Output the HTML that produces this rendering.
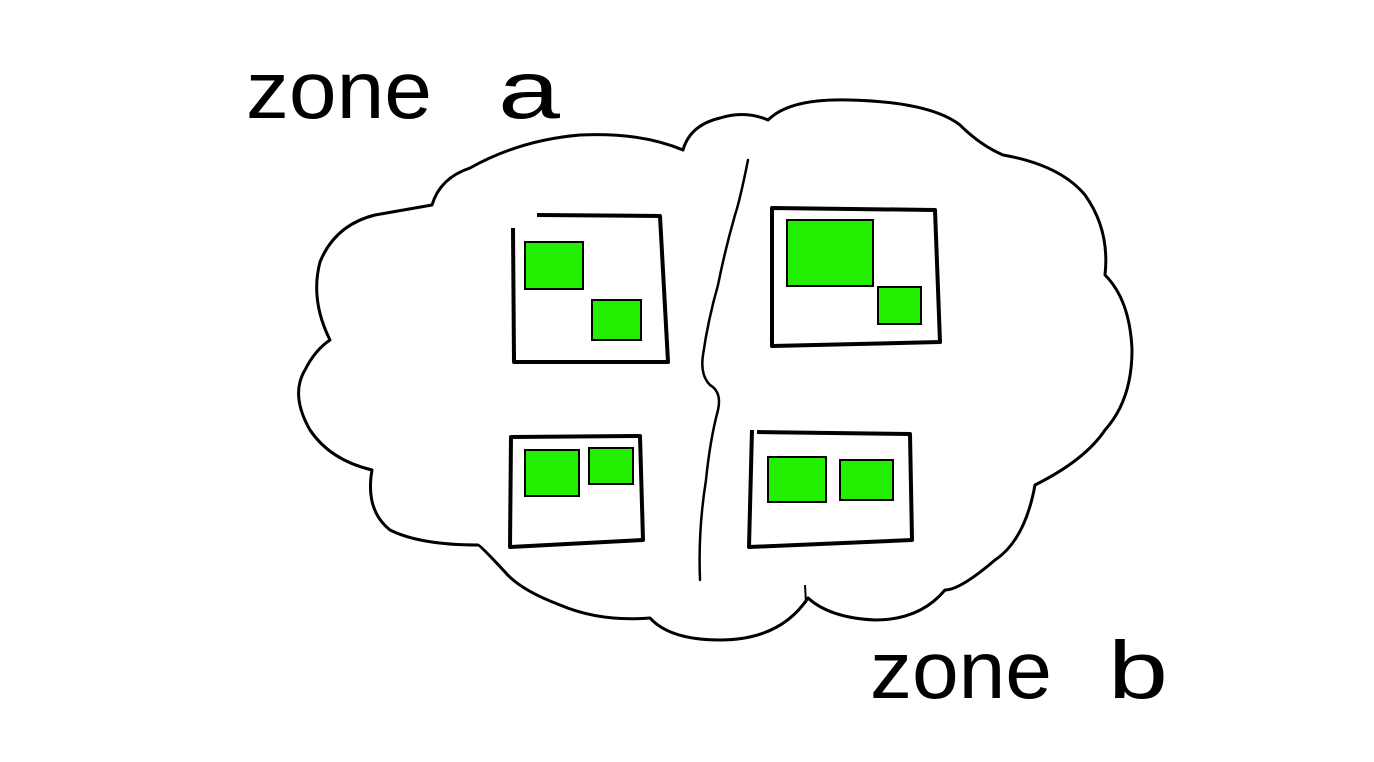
<!DOCTYPE html>
<html><head><meta charset="utf-8"><style>
html,body{margin:0;padding:0;background:#fff;}
svg{display:block;}
</style></head><body>
<svg width="1374" height="762" viewBox="0 0 1374 762" xmlns="http://www.w3.org/2000/svg">
<g font-family="Liberation Sans, sans-serif" font-size="82" fill="#000">
<text x="246" y="118" textLength="186" lengthAdjust="spacingAndGlyphs">zone</text>
<text x="498" y="118" textLength="62" lengthAdjust="spacingAndGlyphs">a</text>
<text x="870" y="698" textLength="182" lengthAdjust="spacingAndGlyphs">zone</text>
<text x="1108" y="698" textLength="60" lengthAdjust="spacingAndGlyphs">b</text>
</g>
<path fill="none" stroke="#000" stroke-width="3" stroke-linejoin="round" d="
M330,340
Q310,300 320,262 Q335,225 375,215 Q415,208 432,205
Q440,178 470,168 Q520,140 580,135 Q640,132 683,150
Q690,125 720,118 Q745,110 768,120
Q790,98 850,100 Q930,102 960,125 Q980,145 1003,155
Q1060,165 1085,195 Q1110,230 1105,275
Q1130,300 1132,350 Q1132,400 1105,430
Q1085,460 1035,485 Q1025,540 995,560
Q960,590 945,590 Q920,620 875,620 Q830,618 808,598
Q780,640 720,640 Q670,640 650,618
Q600,622 560,605 Q520,590 505,572 Q480,545 478,545
Q420,545 390,530 Q365,510 372,470
Q330,460 310,430 Q290,395 305,370 Q315,350 330,340 Z"/>
<path fill="none" stroke="#000" stroke-width="2.5" stroke-linecap="round" d="M748,160 Q740,200 735,215 Q725,250 718,285 Q708,320 703,355 Q700,375 710,385 Q722,392 718,410 Q710,440 706,480 Q698,530 700,580"/>
<path fill="none" stroke="#000" stroke-width="2" d="M805,585 L806,603"/>
<g fill="#22f000" stroke="#000" stroke-width="2">
<rect x="525" y="242" width="58" height="47"/>
<rect x="592" y="300" width="49" height="40"/>
<rect x="787" y="220" width="86" height="66"/>
<rect x="878" y="287" width="43" height="37"/>
<rect x="525" y="450" width="54" height="46"/>
<rect x="589" y="448" width="44" height="36"/>
<rect x="768" y="457" width="58" height="45"/>
<rect x="840" y="460" width="53" height="40"/>
</g>
<g fill="none" stroke="#000" stroke-width="4" stroke-linejoin="round">
<path d="M537,215 L660,216 L668,362 L514,362 L513,228"/>
<path d="M772,208 L935,210 L940,342 L772,346 Z"/>
<path d="M511,437 L640,436 L643,540 L510,547 Z"/>
<path d="M757,432 L910,434 L912,540 L749,547 L752,430"/>
</g>
</svg>
</body></html>
